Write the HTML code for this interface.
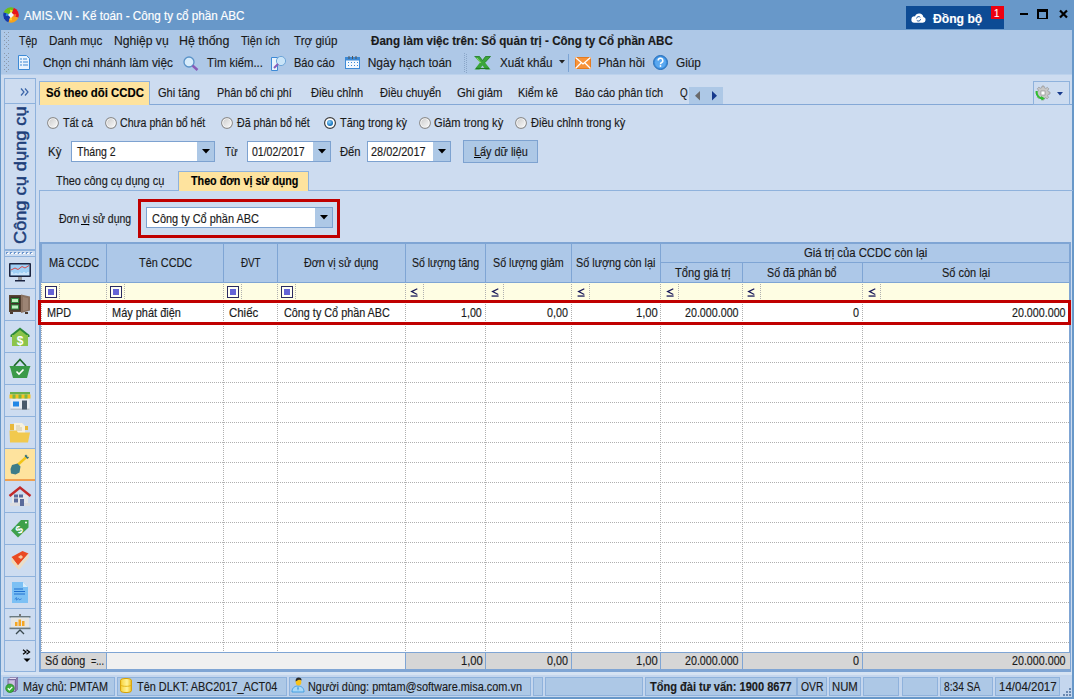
<!DOCTYPE html>
<html><head><meta charset="utf-8">
<style>
*{box-sizing:border-box;margin:0;padding:0}
html,body{width:1074px;height:699px;overflow:hidden;background:#cddcf0;font-family:"Liberation Sans",sans-serif;font-size:12px;color:#000;position:relative}
.a{position:absolute;white-space:nowrap}
.t{line-height:1;transform-origin:0 0;-webkit-text-stroke:0.15px currentColor}
svg{position:absolute;overflow:visible}
</style></head><body>
<div class="a" style="left:0px;top:0px;width:1074px;height:30px;background:#6898c9;"></div>
<div class="a" style="left:0px;top:30px;width:1074px;height:45px;background:#aec8e7;"></div>
<div class="a" style="left:1072px;top:30px;width:2px;height:669px;background:#6898c9;"></div>
<div class="a" style="left:0px;top:30px;width:1px;height:669px;background:#6898c9;"></div>
<svg style="left:3px;top:7px" width="16" height="16" viewBox="0 0 16 16"><g transform="rotate(20 8 8)"><path d="M8 8L8 .2A7.8 7.8 0 0 1 15.8 8z" fill="#e8141a"/><path d="M8 8L15.8 8A7.8 7.8 0 0 1 8 15.8z" fill="#f7a21a"/><path d="M8 8L8 15.8A7.8 7.8 0 0 1 .2 8z" fill="#1538a8"/><path d="M8 8L.2 8A7.8 7.8 0 0 1 8 .2z" fill="#6cbf1a"/><path d="M5.2 3.5A5 5 0 0 1 8 3V8z" fill="#f0e020"/><path d="M12.5 5.2A5 5 0 0 1 13 8H8z" fill="#ff6a20"/><path d="M10.8 12.5A5 5 0 0 1 8 13V8z" fill="#ffd030"/><path d="M3.5 10.8A5 5 0 0 1 3 8H8z" fill="#2a8ae0"/></g><path d="M8 5l3 3-3 3-3-3z" fill="#f4f4f8"/></svg>
<div class="a t" style="left:23.70px;top:10px;font-size:12px;color:#fff;transform:scaleX(0.9717);">AMIS.VN - Kế toán - Công ty cổ phần ABC</div>
<div class="a" style="left:906px;top:6px;width:98px;height:23px;background:#0d4b94;"></div>
<svg style="left:911px;top:13px" width="15" height="10" viewBox="0 0 15 10"><path d="M3.2 9.8h8.6a3 3 0 0 0 .6-5.9A4.4 4.4 0 0 0 4 3.4 3.2 3.2 0 0 0 3.2 9.8z" fill="#fff"/><path d="M5.5 5.5a2.2 2.2 0 0 1 3.8-1.2M9.6 6.2a2.2 2.2 0 0 1-3.8 1.2" fill="none" stroke="#0d4b94" stroke-width=".9"/></svg>
<div class="a t" style="left:932.70px;top:12px;font-size:13px;color:#fff;font-weight:bold;transform:scaleX(0.9346);">Đồng bộ</div>
<div class="a" style="left:991px;top:6px;width:13px;height:13px;background:#ee0010;"></div>
<div class="a t" style="left:994.42px;top:8px;font-size:11px;color:#fff;transform:scaleX(0.8800);">1</div>
<div class="a" style="left:1020px;top:13px;width:8px;height:2px;background:#000;"></div>
<div class="a" style="left:1037px;top:9px;width:11px;height:10px;border:1px solid #000;border-top-width:3px;border-left-width:2px;border-right-width:2px"></div>
<svg style="left:1059px;top:10px" width="9" height="8" viewBox="0 0 9 8"><path d="M1 .5l7 7M8 .5l-7 7" stroke="#000" stroke-width="2.2"/></svg>
<div class="a" style="left:4px;top:32px;width:1px;height:1px;background:#8c98a8;"></div>
<div class="a" style="left:8px;top:32px;width:1px;height:1px;background:#8c98a8;"></div>
<div class="a" style="left:6px;top:34px;width:1px;height:1px;background:#8c98a8;"></div>
<div class="a" style="left:4px;top:36px;width:1px;height:1px;background:#8c98a8;"></div>
<div class="a" style="left:8px;top:36px;width:1px;height:1px;background:#8c98a8;"></div>
<div class="a" style="left:6px;top:38px;width:1px;height:1px;background:#8c98a8;"></div>
<div class="a" style="left:4px;top:40px;width:1px;height:1px;background:#8c98a8;"></div>
<div class="a" style="left:8px;top:40px;width:1px;height:1px;background:#8c98a8;"></div>
<div class="a" style="left:6px;top:42px;width:1px;height:1px;background:#8c98a8;"></div>
<div class="a" style="left:4px;top:44px;width:1px;height:1px;background:#8c98a8;"></div>
<div class="a" style="left:8px;top:44px;width:1px;height:1px;background:#8c98a8;"></div>
<div class="a" style="left:6px;top:46px;width:1px;height:1px;background:#8c98a8;"></div>
<div class="a" style="left:4px;top:48px;width:1px;height:1px;background:#8c98a8;"></div>
<div class="a" style="left:8px;top:48px;width:1px;height:1px;background:#8c98a8;"></div>
<div class="a" style="left:4px;top:53px;width:1px;height:1px;background:#8c98a8;"></div>
<div class="a" style="left:8px;top:53px;width:1px;height:1px;background:#8c98a8;"></div>
<div class="a" style="left:6px;top:55px;width:1px;height:1px;background:#8c98a8;"></div>
<div class="a" style="left:4px;top:57px;width:1px;height:1px;background:#8c98a8;"></div>
<div class="a" style="left:8px;top:57px;width:1px;height:1px;background:#8c98a8;"></div>
<div class="a" style="left:6px;top:59px;width:1px;height:1px;background:#8c98a8;"></div>
<div class="a" style="left:4px;top:61px;width:1px;height:1px;background:#8c98a8;"></div>
<div class="a" style="left:8px;top:61px;width:1px;height:1px;background:#8c98a8;"></div>
<div class="a" style="left:6px;top:63px;width:1px;height:1px;background:#8c98a8;"></div>
<div class="a" style="left:4px;top:65px;width:1px;height:1px;background:#8c98a8;"></div>
<div class="a" style="left:8px;top:65px;width:1px;height:1px;background:#8c98a8;"></div>
<div class="a" style="left:6px;top:67px;width:1px;height:1px;background:#8c98a8;"></div>
<div class="a" style="left:4px;top:69px;width:1px;height:1px;background:#8c98a8;"></div>
<div class="a" style="left:8px;top:69px;width:1px;height:1px;background:#8c98a8;"></div>
<div class="a" style="left:6px;top:71px;width:1px;height:1px;background:#8c98a8;"></div>
<div class="a t" style="left:18.70px;top:35px;font-size:12px;color:#1a1a1a;transform:scaleX(0.8800);">Tệp</div>
<div class="a t" style="left:48.73px;top:35px;font-size:12px;color:#1a1a1a;transform:scaleX(0.9736);">Danh mục</div>
<div class="a t" style="left:113.69px;top:35px;font-size:12px;color:#1a1a1a;transform:scaleX(1.0115);">Nghiệp vụ</div>
<div class="a t" style="left:178.67px;top:35px;font-size:12px;color:#1a1a1a;transform:scaleX(1.0340);">Hệ thống</div>
<div class="a t" style="left:240.70px;top:35px;font-size:12px;color:#1a1a1a;transform:scaleX(0.9190);">Tiện ích</div>
<div class="a t" style="left:293.70px;top:35px;font-size:12px;color:#1a1a1a;transform:scaleX(0.9682);">Trợ giúp</div>
<div class="a t" style="left:370.70px;top:35px;font-size:12px;color:#1a1a1a;font-weight:bold;transform:scaleX(0.9667);">Đang làm việc trên: Sổ quản trị - Công ty Cổ phần ABC</div>
<svg style="left:18px;top:55px" width="12" height="15" viewBox="0 0 12 15"><path d="M.5 .5h8l3 3v11H.5z" fill="#e8f3fd" stroke="#3d8ad6"/><path d="M2 4h2M2 7h2M2 10h2M5 4h4M5 7h5M5 10h5" stroke="#3d8ad6" stroke-width="1.2"/></svg>
<div class="a t" style="left:42.71px;top:57px;font-size:12px;color:#1a1a1a;transform:scaleX(0.9892);">Chọn chi nhánh làm việc</div>
<svg style="left:183px;top:56px" width="16" height="15" viewBox="0 0 16 15"><circle cx="6" cy="6" r="5" fill="#d8ecfb" stroke="#5a93c8" stroke-width="1.3"/><path d="M9.5 9.5l5 4.5" stroke="#8a5bb8" stroke-width="2.4"/></svg>
<div class="a t" style="left:206.70px;top:57px;font-size:12px;color:#1a1a1a;transform:scaleX(0.9414);">Tìm kiếm...</div>
<svg style="left:271px;top:55px" width="16" height="16" viewBox="0 0 16 16"><path d="M.5 2.5h6v13H.5z" fill="#e8f3fd" stroke="#3d8ad6"/><circle cx="10" cy="6" r="4.6" fill="#c9e4f8" stroke="#6fa6d8"/><path d="M7 9l-4 4" stroke="#8a5bb8" stroke-width="2"/></svg>
<div class="a t" style="left:293.78px;top:57px;font-size:12px;color:#1a1a1a;transform:scaleX(0.9209);">Báo cáo</div>
<svg style="left:345px;top:56px" width="15" height="13" viewBox="0 0 15 13"><rect x=".5" y="1.5" width="14" height="11" fill="#f2f8fe" stroke="#3d8ad6"/><rect x=".5" y="1.5" width="14" height="3" fill="#3d8ad6"/><path d="M3 6.5h1M6 6.5h1M9 6.5h1M12 6.5h1M3 9.5h1M6 9.5h1M9 9.5h1M12 9.5h1" stroke="#3d8ad6"/><path d="M4 0v3M7.5 0v3M11 0v3" stroke="#555"/></svg>
<div class="a t" style="left:367.70px;top:57px;font-size:12px;color:#1a1a1a;">Ngày hạch toán</div>
<div class="a" style="left:464px;top:53px;width:1px;height:1px;background:#8aa6c8;"></div>
<div class="a" style="left:466px;top:54px;width:1px;height:1px;background:#8aa6c8;"></div>
<div class="a" style="left:464px;top:55px;width:1px;height:1px;background:#8aa6c8;"></div>
<div class="a" style="left:466px;top:56px;width:1px;height:1px;background:#8aa6c8;"></div>
<div class="a" style="left:464px;top:57px;width:1px;height:1px;background:#8aa6c8;"></div>
<div class="a" style="left:466px;top:58px;width:1px;height:1px;background:#8aa6c8;"></div>
<div class="a" style="left:464px;top:59px;width:1px;height:1px;background:#8aa6c8;"></div>
<div class="a" style="left:466px;top:60px;width:1px;height:1px;background:#8aa6c8;"></div>
<div class="a" style="left:464px;top:61px;width:1px;height:1px;background:#8aa6c8;"></div>
<div class="a" style="left:466px;top:62px;width:1px;height:1px;background:#8aa6c8;"></div>
<div class="a" style="left:464px;top:63px;width:1px;height:1px;background:#8aa6c8;"></div>
<div class="a" style="left:466px;top:64px;width:1px;height:1px;background:#8aa6c8;"></div>
<div class="a" style="left:464px;top:65px;width:1px;height:1px;background:#8aa6c8;"></div>
<div class="a" style="left:466px;top:66px;width:1px;height:1px;background:#8aa6c8;"></div>
<div class="a" style="left:464px;top:67px;width:1px;height:1px;background:#8aa6c8;"></div>
<div class="a" style="left:466px;top:68px;width:1px;height:1px;background:#8aa6c8;"></div>
<div class="a" style="left:464px;top:69px;width:1px;height:1px;background:#8aa6c8;"></div>
<div class="a" style="left:466px;top:70px;width:1px;height:1px;background:#8aa6c8;"></div>
<div class="a" style="left:464px;top:71px;width:1px;height:1px;background:#8aa6c8;"></div>
<div class="a" style="left:466px;top:72px;width:1px;height:1px;background:#8aa6c8;"></div>
<svg style="left:474px;top:56px" width="17" height="14" viewBox="0 0 17 14"><path d="M.5 .5h5l3 4 3-4h5l-5.5 6 5.5 7h-5l-3-4-3 4h-5l5.5-7z" fill="#3aa53a"/><path d="M.5 .5h5l3 4 3-4h5l-5.5 6" fill="none" stroke="#1f7a22" stroke-width=".8"/><path d="M2 12.5h13" stroke="#1f7a22" stroke-width="1.2"/><path d="M3 2l4 5" stroke="#8fdc6a" stroke-width="1"/></svg>
<div class="a t" style="left:499.70px;top:57px;font-size:12px;color:#1a1a1a;transform:scaleX(0.9736);">Xuất khẩu</div>
<svg style="left:559px;top:60px" width="6" height="4" viewBox="0 0 6 4"><path d="M0 0h6L3 3.5z" fill="#222"/></svg>
<div class="a" style="left:568px;top:54px;width:1px;height:18px;background:#7ba3d3;"></div>
<svg style="left:575px;top:57px" width="16" height="12" viewBox="0 0 16 12"><rect x=".5" y=".5" width="15" height="11" fill="#f7933a" stroke="#e57b1f"/><path d="M.5 .5L8 7l7.5-6.5M.5 11.5L6 6M15.5 11.5L10 6" fill="none" stroke="#fff" stroke-width="1.3"/></svg>
<div class="a t" style="left:597.71px;top:57px;font-size:12px;color:#1a1a1a;transform:scaleX(0.9913);">Phản hồi</div>
<svg style="left:653px;top:55px" width="15" height="15" viewBox="0 0 15 15"><circle cx="7.5" cy="7.5" r="7" fill="#3b8fe0" stroke="#2a6fb8"/><circle cx="7.5" cy="7.5" r="5.5" fill="#5aa8f0"/><path d="M5.2 5.6a2.3 2.3 0 1 1 3.2 2.1c-.7.3-.9.7-.9 1.5" fill="none" stroke="#fff" stroke-width="1.5"/><circle cx="7.5" cy="11" r=".9" fill="#fff"/></svg>
<div class="a t" style="left:675.72px;top:57px;font-size:12px;color:#1a1a1a;transform:scaleX(0.9833);">Giúp</div>
<div class="a" style="left:1px;top:74px;width:1071px;height:1px;background:#bcd2ec;"></div>
<div class="a" style="left:4px;top:78px;width:32px;height:594px;background:#cddcf0;border:1px solid #8fb2dc;"></div>
<div class="a" style="left:4px;top:103px;width:32px;height:1px;background:#8fb2dc;"></div>
<svg style="left:20px;top:88px" width="9" height="8" viewBox="0 0 9 8"><path d="M1 .5l3 3.5-3 3.5M5 .5l3 3.5-3 3.5" fill="none" stroke="#3a64a8" stroke-width="1.2"/></svg>
<div class="a" style="left:12px;top:244px;transform-origin:0 0;transform:rotate(-90deg)"><span style="display:block;font-size:17px;line-height:17px;color:#1e3f7a;white-space:nowrap;transform-origin:0 0;transform:scaleX(1.07);-webkit-text-stroke:0.5px #1e3f7a">Công cụ dụng cụ</span></div>
<div class="a" style="left:4px;top:249px;width:32px;height:2px;background:#8fb2dc;"></div>
<div class="a" style="left:6px;top:252px;width:2px;height:2px;background:#6a94cc;"></div>
<div class="a" style="left:8px;top:253px;width:1px;height:1px;background:#ffffff;"></div>
<div class="a" style="left:7px;top:253px;width:2px;height:1px;background:#ffffff;"></div>
<div class="a" style="left:10px;top:252px;width:2px;height:2px;background:#6a94cc;"></div>
<div class="a" style="left:12px;top:253px;width:1px;height:1px;background:#ffffff;"></div>
<div class="a" style="left:11px;top:253px;width:2px;height:1px;background:#ffffff;"></div>
<div class="a" style="left:14px;top:252px;width:2px;height:2px;background:#6a94cc;"></div>
<div class="a" style="left:16px;top:253px;width:1px;height:1px;background:#ffffff;"></div>
<div class="a" style="left:15px;top:253px;width:2px;height:1px;background:#ffffff;"></div>
<div class="a" style="left:18px;top:252px;width:2px;height:2px;background:#6a94cc;"></div>
<div class="a" style="left:20px;top:253px;width:1px;height:1px;background:#ffffff;"></div>
<div class="a" style="left:19px;top:253px;width:2px;height:1px;background:#ffffff;"></div>
<div class="a" style="left:22px;top:252px;width:2px;height:2px;background:#6a94cc;"></div>
<div class="a" style="left:24px;top:253px;width:1px;height:1px;background:#ffffff;"></div>
<div class="a" style="left:23px;top:253px;width:2px;height:1px;background:#ffffff;"></div>
<div class="a" style="left:26px;top:252px;width:2px;height:2px;background:#6a94cc;"></div>
<div class="a" style="left:28px;top:253px;width:1px;height:1px;background:#ffffff;"></div>
<div class="a" style="left:27px;top:253px;width:2px;height:1px;background:#ffffff;"></div>
<div class="a" style="left:30px;top:252px;width:2px;height:2px;background:#6a94cc;"></div>
<div class="a" style="left:32px;top:253px;width:1px;height:1px;background:#ffffff;"></div>
<div class="a" style="left:31px;top:253px;width:2px;height:1px;background:#ffffff;"></div>
<div class="a" style="left:5px;top:256px;width:30px;height:1px;background:#8fb2dc;"></div>
<div class="a" style="left:5px;top:288px;width:30px;height:1px;background:#8fb2dc;"></div>
<div class="a" style="left:5px;top:320px;width:30px;height:1px;background:#8fb2dc;"></div>
<div class="a" style="left:5px;top:352px;width:30px;height:1px;background:#8fb2dc;"></div>
<div class="a" style="left:5px;top:384px;width:30px;height:1px;background:#8fb2dc;"></div>
<div class="a" style="left:5px;top:416px;width:30px;height:1px;background:#8fb2dc;"></div>
<div class="a" style="left:5px;top:448px;width:30px;height:1px;background:#8fb2dc;"></div>
<div class="a" style="left:5px;top:480px;width:30px;height:1px;background:#8fb2dc;"></div>
<div class="a" style="left:5px;top:512px;width:30px;height:1px;background:#8fb2dc;"></div>
<div class="a" style="left:5px;top:544px;width:30px;height:1px;background:#8fb2dc;"></div>
<div class="a" style="left:5px;top:576px;width:30px;height:1px;background:#8fb2dc;"></div>
<div class="a" style="left:5px;top:608px;width:30px;height:1px;background:#8fb2dc;"></div>
<div class="a" style="left:5px;top:640px;width:30px;height:1px;background:#8fb2dc;"></div>
<div class="a" style="left:5px;top:449px;width:30px;height:31px;background:#fee39e;"></div>
<div class="a" style="left:5px;top:479px;width:30px;height:2px;background:#f0a050;"></div>
<svg style="left:8px;top:261px" width="24" height="24" viewBox="0 0 24 24"><rect x="1" y="2" width="22" height="14" rx="1" fill="#1c2440"/><rect x="2.5" y="3.5" width="19" height="11" fill="#9fd0f6"/><path d="M3 9l4-2 3 1.5 4-3 3 1.5 4-2.5" fill="none" stroke="#d94a4a" stroke-width="1"/><path d="M4 14v-3M6 14v-1.5M8 14v-2M10 14v-1.5M12 14v-2.5M14 14v-2M16 14v-3M18 14v-2M20 14v-3" stroke="#f4f8ff" stroke-width="1"/><rect x="10" y="16" width="4" height="3" fill="#9a9a9a"/><rect x="7" y="19" width="10" height="1.5" fill="#1c2440"/></svg>
<svg style="left:8px;top:293px" width="24" height="24" viewBox="0 0 24 24"><rect x="1" y="2" width="13" height="17" fill="#5a4636"/><rect x="2.5" y="3.5" width="10" height="14" fill="#3e3026"/><rect x="3" y="5" width="8" height="5" fill="#2e8a3e"/><rect x="4" y="6" width="6" height="3" fill="#bfeec0"/><rect x="3" y="11.5" width="8" height="5" fill="#2e8a3e"/><rect x="4" y="12.5" width="6" height="3" fill="#bfeec0"/><path d="M13 1.5l9 2v14l-9 2.5z" fill="#8a7262"/><path d="M15 4l5 1.2v11.6l-5 1.2z" fill="#9c8474"/><rect x="2" y="19" width="3" height="2" fill="#4a3a2e"/><rect x="17" y="19" width="3" height="2" fill="#4a3a2e"/></svg>
<svg style="left:8px;top:325px" width="24" height="24" viewBox="0 0 24 24"><path d="M12 2.5l9.5 7.5v2H2.5v-2z" fill="#2c8a3a"/><rect x="4" y="10" width="16" height="11" fill="#8cc44a"/><path d="M12 5l7 5.5H5z" fill="#8cc44a"/><text x="12" y="19.5" font-size="12" font-family="Liberation Sans" font-weight="bold" fill="#fff" text-anchor="middle">$</text></svg>
<svg style="left:8px;top:357px" width="24" height="24" viewBox="0 0 24 24"><path d="M6 9l6-6.5 6 6.5" fill="none" stroke="#1f6a2a" stroke-width="1.8"/><path d="M1.5 9h21l-1 2.5-2.5 9.5H5L2.5 11.5z" fill="#3a9a48"/><path d="M8.5 14.5l2.5 2.5 4.5-4.5" fill="none" stroke="#fff" stroke-width="1.6"/></svg>
<svg style="left:8px;top:389px" width="24" height="24" viewBox="0 0 24 24"><rect x="2" y="3" width="20" height="2.5" fill="#6ab04c"/><path d="M1.5 5.5h21v4h-21z" fill="#f6c21c"/><path d="M4.5 5.5h3v4h-3zM10.5 5.5h3v4h-3zM16.5 5.5h3v4h-3z" fill="#7ab648"/><rect x="2.5" y="10" width="19" height="11" fill="#e9edf2"/><rect x="2.5" y="19.5" width="19" height="1.5" fill="#b9c2cc"/><rect x="5" y="12.5" width="6" height="5" fill="#2388e6"/><rect x="14" y="11.5" width="5" height="9" fill="#48596a"/></svg>
<svg style="left:8px;top:421px" width="24" height="24" viewBox="0 0 24 24"><path d="M2 3h6l1 2h11v4H2z" fill="#e8b83a"/><path d="M6 2h8l3 3v9H6z" fill="#f7f1de"/><path d="M8 5h4M8 7h6M8 9h6" stroke="#c9bd98" stroke-width=".8"/><path d="M1.5 9.5h7l1.5 2h12l-2 10h-18z" fill="#f1c94e"/></svg>
<svg style="left:8px;top:453px" width="24" height="24" viewBox="0 0 24 24"><path d="M8.5 13l11-10" stroke="#f2c518" stroke-width="2.4"/><path d="M18 1.5l3 3-1.5 1.5-3-3z" fill="#2f6f7f"/><path d="M19 2.8l1 1" stroke="#f6f0b0" stroke-width="1"/><path d="M9.5 10.5l3 3-1 6-4 2-4.5-1-.5-4.5 1.5-4z" fill="#3d7c89"/></svg>
<svg style="left:8px;top:485px" width="24" height="24" viewBox="0 0 24 24"><rect x="4" y="10" width="16" height="11" fill="#e6e7ea"/><rect x="2" y="18" width="20" height="3" fill="#dcdde0"/><path d="M1.5 11l10.5-8.5L22.5 11" fill="none" stroke="#c22a2a" stroke-width="2.4"/><rect x="6" y="9.5" width="4" height="3" fill="#5a6a9a"/><rect x="11" y="9.5" width="4" height="3" fill="#5a6a9a"/><rect x="6" y="13.5" width="4" height="4" fill="#5a6a9a"/><rect x="12" y="14" width="4" height="7" fill="#5a6a9a"/></svg>
<svg style="left:8px;top:517px" width="24" height="24" viewBox="0 0 24 24"><path d="M3 13.5l10-10.5h7.5v7.5l-10.5 10z" fill="#3fa04a"/><circle cx="18" cy="5.5" r="1" fill="#fff"/><text x="11" y="16.5" font-size="11" font-family="Liberation Sans" font-weight="bold" fill="#fff" text-anchor="middle" transform="rotate(-40 11 12.5)">$</text></svg>
<svg style="left:8px;top:549px" width="24" height="24" viewBox="0 0 24 24"><path d="M3.5 8l11-6 6 2.5-10.5 12z" fill="#ea4a22"/><path d="M3.5 8l6.5 8.5 1 4.5-7.5-8z" fill="#f4d8b0"/><path d="M10 16.5l10.5-12 .5 4-10 12.5z" fill="#e9ddc8"/><path d="M10 8l3-2 2 2-2 2z" fill="#f8c8a0"/></svg>
<svg style="left:8px;top:581px" width="24" height="24" viewBox="0 0 24 24"><path d="M4 1h11l5 5v16H4z" fill="#7cc0f4"/><path d="M15 1v5h5z" fill="#d8ecfb"/><path d="M6 8h9M6 10.5h11M6 13h11" stroke="#1f6fd0" stroke-width="1"/><path d="M7 18.5c1-3 2-2 1.5 0s2-2 2.5-.5 1 .5 2.5-.2" fill="none" stroke="#1f6fd0" stroke-width=".8"/></svg>
<svg style="left:8px;top:613px" width="24" height="24" viewBox="0 0 24 24"><rect x="11" y="1" width="2" height="2" fill="#777"/><rect x="1.5" y="3" width="21" height="1.6" fill="#6a7a80"/><rect x="3" y="4.6" width="18" height="10" fill="#e6e6e2"/><path d="M7 13V9h2.5v4zM10.5 13V6.5H13V13zM14 13V8h2.5v5z" fill="#f5a623"/><rect x="1.5" y="14.6" width="21" height="1.6" fill="#6a7a80"/><path d="M8 21l4-4 4 4" fill="none" stroke="#3a4a50" stroke-width="1.3"/></svg>
<svg style="left:22px;top:649px" width="9" height="14" viewBox="0 0 9 14"><path d="M1 .8l3 2.2-3 2.2M4.5 .8l3 2.2-3 2.2" fill="none" stroke="#000" stroke-width="1.3"/><path d="M1.5 9.5h7l-3.5 3.5z" fill="#000"/></svg>
<div class="a" style="left:36px;top:75px;width:3px;height:597px;background:#cddcf0;"></div>
<div class="a" style="left:39px;top:104px;width:1033px;height:1px;background:#84a8d6;"></div>
<div class="a" style="left:39px;top:81px;width:111px;height:24px;background:#fee39e;border:1px solid #8fb2dc;border-bottom:none"></div>
<div class="a t" style="left:45.75px;top:87px;font-size:12px;color:#000;font-weight:bold;transform:scaleX(0.9471);">Số theo dõi CCDC</div>
<div class="a t" style="left:157.78px;top:87px;font-size:12px;color:#1a1a1a;transform:scaleX(0.9227);">Ghi tăng</div>
<div class="a t" style="left:216.80px;top:87px;font-size:12px;color:#1a1a1a;transform:scaleX(0.8976);">Phân bổ chi phí</div>
<div class="a t" style="left:310.70px;top:87px;font-size:12px;color:#1a1a1a;transform:scaleX(0.9214);">Điều chỉnh</div>
<div class="a t" style="left:379.70px;top:87px;font-size:12px;color:#1a1a1a;transform:scaleX(0.9182);">Điều chuyển</div>
<div class="a t" style="left:456.75px;top:87px;font-size:12px;color:#1a1a1a;transform:scaleX(0.9478);">Ghi giảm</div>
<div class="a t" style="left:517.78px;top:87px;font-size:12px;color:#1a1a1a;transform:scaleX(0.9190);">Kiểm kê</div>
<div class="a t" style="left:574.79px;top:87px;font-size:12px;color:#1a1a1a;transform:scaleX(0.9116);">Báo cáo phân tích</div>
<div class="a t" style="left:680.30px;top:87px;font-size:12px;color:#1a1a1a;transform:scaleX(0.8222);">Q</div>
<div class="a" style="left:689px;top:87px;width:34px;height:17px;background:#adc8e6;"></div>
<svg style="left:695px;top:91px" width="23" height="10" viewBox="0 0 23 10"><path d="M5 0v9.5L0 4.75z" fill="#6a6a6a"/><path d="M17 0v9.5l5-4.75z" fill="#16398c"/></svg>
<div class="a" style="left:1033px;top:81px;width:37px;height:24px;background:#cddcf0;border:1px solid #8fb2dc;"></div>
<svg style="left:1035px;top:85px" width="16" height="16" viewBox="0 0 16 16"><path d="M7 1h2l.4 1.8 1.4.6 1.6-1 1.4 1.4-1 1.6.6 1.4L15 7v2l-1.8.4-.6 1.4 1 1.6-1.4 1.4-1.6-1-1.4.6L9 15H7l-.4-1.8-1.4-.6-1.6 1-1.4-1.4 1-1.6-.6-1.4L1 9V7l1.8-.4.6-1.4-1-1.6 1.4-1.4 1.6 1 1.4-.6z" fill="#c8c8c8" stroke="#8a8a8a" stroke-width=".6"/><rect x="6" y="6" width="4" height="4" fill="#fff" stroke="#888" stroke-width=".6"/><path d="M1.5 6c0 5 3 7.5 6.5 7.5" fill="none" stroke="#2fbf2f" stroke-width="2"/><path d="M6 11l4 2.5-3.5 2z" fill="#2fbf2f"/></svg>
<svg style="left:1057px;top:92px" width="6" height="4" viewBox="0 0 6 4"><path d="M0 0h6L3 3.5z" fill="#16398c"/></svg>
<svg style="left:47px;top:117px" width="12" height="12" viewBox="0 0 12 12"><defs><linearGradient id="rg47" x1="0" y1="0" x2="1" y2="1"><stop offset="0" stop-color="#cfcfcf"/><stop offset="1" stop-color="#f6f6f6"/></linearGradient></defs><circle cx="6" cy="6" r="5.4" fill="#fff" stroke="#8c8c8c" stroke-width="1.1"/><circle cx="6" cy="6" r="3.9" fill="url(#rg47)"/></svg>
<div class="a t" style="left:62.70px;top:117px;font-size:12px;color:#1a1a1a;transform:scaleX(0.8970);">Tất cả</div>
<svg style="left:105px;top:117px" width="12" height="12" viewBox="0 0 12 12"><defs><linearGradient id="rg105" x1="0" y1="0" x2="1" y2="1"><stop offset="0" stop-color="#cfcfcf"/><stop offset="1" stop-color="#f6f6f6"/></linearGradient></defs><circle cx="6" cy="6" r="5.4" fill="#fff" stroke="#8c8c8c" stroke-width="1.1"/><circle cx="6" cy="6" r="3.9" fill="url(#rg105)"/></svg>
<div class="a t" style="left:119.82px;top:117px;font-size:12px;color:#1a1a1a;transform:scaleX(0.8812);">Chưa phân bổ hết</div>
<svg style="left:221px;top:117px" width="12" height="12" viewBox="0 0 12 12"><defs><linearGradient id="rg221" x1="0" y1="0" x2="1" y2="1"><stop offset="0" stop-color="#cfcfcf"/><stop offset="1" stop-color="#f6f6f6"/></linearGradient></defs><circle cx="6" cy="6" r="5.4" fill="#fff" stroke="#8c8c8c" stroke-width="1.1"/><circle cx="6" cy="6" r="3.9" fill="url(#rg221)"/></svg>
<div class="a t" style="left:236.70px;top:117px;font-size:12px;color:#1a1a1a;transform:scaleX(0.8854);">Đã phân bổ hết</div>
<svg style="left:324px;top:117px" width="12" height="12" viewBox="0 0 12 12"><defs><radialGradient id="rg324" cx="40%" cy="35%" r="60%"><stop offset="0" stop-color="#8fd4ff"/><stop offset="1" stop-color="#1570b8"/></radialGradient></defs><circle cx="6" cy="6" r="5.4" fill="#fff" stroke="#3a3a3a" stroke-width="1.2"/><circle cx="6" cy="6" r="3" fill="url(#rg324)"/></svg>
<div class="a t" style="left:339.70px;top:117px;font-size:12px;color:#1a1a1a;transform:scaleX(0.9123);">Tăng trong kỳ</div>
<svg style="left:419px;top:117px" width="12" height="12" viewBox="0 0 12 12"><defs><linearGradient id="rg419" x1="0" y1="0" x2="1" y2="1"><stop offset="0" stop-color="#cfcfcf"/><stop offset="1" stop-color="#f6f6f6"/></linearGradient></defs><circle cx="6" cy="6" r="5.4" fill="#fff" stroke="#8c8c8c" stroke-width="1.1"/><circle cx="6" cy="6" r="3.9" fill="url(#rg419)"/></svg>
<div class="a t" style="left:433.77px;top:117px;font-size:12px;color:#1a1a1a;transform:scaleX(0.9270);">Giảm trong kỳ</div>
<svg style="left:515px;top:117px" width="12" height="12" viewBox="0 0 12 12"><defs><linearGradient id="rg515" x1="0" y1="0" x2="1" y2="1"><stop offset="0" stop-color="#cfcfcf"/><stop offset="1" stop-color="#f6f6f6"/></linearGradient></defs><circle cx="6" cy="6" r="5.4" fill="#fff" stroke="#8c8c8c" stroke-width="1.1"/><circle cx="6" cy="6" r="3.9" fill="url(#rg515)"/></svg>
<div class="a t" style="left:530.70px;top:117px;font-size:12px;color:#1a1a1a;transform:scaleX(0.9184);">Điều chỉnh trong kỳ</div>
<div class="a t" style="left:48.35px;top:146px;font-size:12px;color:#1a1a1a;transform:scaleX(0.9538);">Kỳ</div>
<div class="a" style="left:71px;top:141px;width:144px;height:21px;background:#fff;border:1px solid #7da2d0;"></div>
<div class="a" style="left:197px;top:142px;width:17px;height:19px;background:#adc8e6;"></div>
<svg style="left:202px;top:149px" width="8" height="5" viewBox="0 0 8 5"><path d="M0 0h8L4 4.5z" fill="#000"/></svg>
<div class="a t" style="left:76.70px;top:146px;font-size:12px;color:#1a1a1a;transform:scaleX(0.8773);">Tháng 2</div>
<div class="a t" style="left:225.30px;top:146px;font-size:12px;color:#1a1a1a;transform:scaleX(0.8267);">Từ</div>
<div class="a" style="left:247px;top:141px;width:84px;height:21px;background:#fff;border:1px solid #7da2d0;"></div>
<div class="a" style="left:313px;top:142px;width:17px;height:19px;background:#adc8e6;"></div>
<svg style="left:318px;top:149px" width="8" height="5" viewBox="0 0 8 5"><path d="M0 0h8L4 4.5z" fill="#000"/></svg>
<div class="a t" style="left:251.70px;top:146px;font-size:12px;color:#1a1a1a;transform:scaleX(0.8767);">01/02/2017</div>
<div class="a t" style="left:339.70px;top:146px;font-size:12px;color:#1a1a1a;transform:scaleX(0.9333);">Đến</div>
<div class="a" style="left:367px;top:141px;width:84px;height:21px;background:#fff;border:1px solid #7da2d0;"></div>
<div class="a" style="left:433px;top:142px;width:17px;height:19px;background:#adc8e6;"></div>
<svg style="left:438px;top:149px" width="8" height="5" viewBox="0 0 8 5"><path d="M0 0h8L4 4.5z" fill="#000"/></svg>
<div class="a t" style="left:370.79px;top:146px;font-size:12px;color:#1a1a1a;transform:scaleX(0.9085);">28/02/2017</div>
<div class="a" style="left:463px;top:140px;width:75px;height:23px;background:#adc8e6;border:1px solid #7da2d0;"></div>
<div class="a t" style="left:473.79px;top:146px;font-size:12px;color:#1a1a1a;transform:scaleX(0.9069);">Lấy dữ liệu</div>
<div class="a" style="left:474px;top:157px;width:7px;height:1px;background:#000;"></div>
<div class="a" style="left:39px;top:190px;width:1034px;height:1px;background:#8fb2dc;"></div>
<div class="a t" style="left:55.70px;top:175px;font-size:12px;color:#1a1a1a;transform:scaleX(0.9119);">Theo công cụ dụng cụ</div>
<div class="a" style="left:178px;top:171px;width:131px;height:20px;background:#fee39e;border:1px solid #8fb2dc;border-bottom:none"></div>
<div class="a t" style="left:190.70px;top:175px;font-size:12px;color:#000;font-weight:bold;transform:scaleX(0.8958);">Theo đơn vị sử dụng</div>
<div class="a" style="left:39px;top:190px;width:1px;height:52px;background:#8fb2dc;"></div>
<div class="a t" style="left:58.70px;top:213px;font-size:12px;color:#1a1a1a;transform:scaleX(0.8732);">Đơn vị sử dụng</div>
<div class="a" style="left:81px;top:224px;width:8px;height:1px;background:#000;"></div>
<div class="a" style="left:138px;top:199px;width:202px;height:39px;border:3px solid #c00000;"></div>
<div class="a" style="left:146px;top:207px;width:187px;height:21px;background:#fff;border:1px solid #7da2d0;"></div>
<div class="a" style="left:315px;top:208px;width:17px;height:19px;background:#adc8e6;"></div>
<svg style="left:320px;top:215px" width="8" height="5" viewBox="0 0 8 5"><path d="M0 0h8L4 4.5z" fill="#000"/></svg>
<div class="a t" style="left:151.79px;top:213px;font-size:12px;color:#1a1a1a;transform:scaleX(0.9103);">Công ty Cổ phần ABC</div>
<div class="a" style="left:39px;top:242px;width:1032px;height:40px;background:#adc8e8;"></div>
<div class="a" style="left:39px;top:242px;width:1032px;height:2px;background:#7fa5d4;"></div>
<div class="a" style="left:661px;top:262px;width:409px;height:1px;background:#7fa5d4;"></div>
<div class="a" style="left:39px;top:282px;width:1032px;height:1px;background:#7fa5d4;"></div>
<div class="a" style="left:106px;top:243px;width:1px;height:39px;background:#7fa5d4;"></div>
<div class="a" style="left:223px;top:243px;width:1px;height:39px;background:#7fa5d4;"></div>
<div class="a" style="left:277px;top:243px;width:1px;height:39px;background:#7fa5d4;"></div>
<div class="a" style="left:405px;top:243px;width:1px;height:39px;background:#7fa5d4;"></div>
<div class="a" style="left:485px;top:243px;width:1px;height:39px;background:#7fa5d4;"></div>
<div class="a" style="left:571px;top:243px;width:1px;height:39px;background:#7fa5d4;"></div>
<div class="a" style="left:660px;top:243px;width:1px;height:39px;background:#7fa5d4;"></div>
<div class="a" style="left:742px;top:262px;width:1px;height:20px;background:#7fa5d4;"></div>
<div class="a" style="left:862px;top:262px;width:1px;height:20px;background:#7fa5d4;"></div>
<div class="a" style="left:41px;top:283px;width:1029px;height:19px;background:#fefde3;"></div>
<div class="a" style="left:41px;top:302px;width:1029px;height:350px;background:#ffffff;"></div>
<div class="a" style="left:41px;top:342px;width:1029px;height:1px;background-image:linear-gradient(to right,#b0b0b0 50%,transparent 50%);background-size:2px 1px;background-position:1px 0;"></div>
<div class="a" style="left:41px;top:362px;width:1029px;height:1px;background-image:linear-gradient(to right,#b0b0b0 50%,transparent 50%);background-size:2px 1px;background-position:1px 0;"></div>
<div class="a" style="left:41px;top:382px;width:1029px;height:1px;background-image:linear-gradient(to right,#b0b0b0 50%,transparent 50%);background-size:2px 1px;background-position:1px 0;"></div>
<div class="a" style="left:41px;top:402px;width:1029px;height:1px;background-image:linear-gradient(to right,#b0b0b0 50%,transparent 50%);background-size:2px 1px;background-position:1px 0;"></div>
<div class="a" style="left:41px;top:422px;width:1029px;height:1px;background-image:linear-gradient(to right,#b0b0b0 50%,transparent 50%);background-size:2px 1px;background-position:1px 0;"></div>
<div class="a" style="left:41px;top:442px;width:1029px;height:1px;background-image:linear-gradient(to right,#b0b0b0 50%,transparent 50%);background-size:2px 1px;background-position:1px 0;"></div>
<div class="a" style="left:41px;top:462px;width:1029px;height:1px;background-image:linear-gradient(to right,#b0b0b0 50%,transparent 50%);background-size:2px 1px;background-position:1px 0;"></div>
<div class="a" style="left:41px;top:482px;width:1029px;height:1px;background-image:linear-gradient(to right,#b0b0b0 50%,transparent 50%);background-size:2px 1px;background-position:1px 0;"></div>
<div class="a" style="left:41px;top:502px;width:1029px;height:1px;background-image:linear-gradient(to right,#b0b0b0 50%,transparent 50%);background-size:2px 1px;background-position:1px 0;"></div>
<div class="a" style="left:41px;top:522px;width:1029px;height:1px;background-image:linear-gradient(to right,#b0b0b0 50%,transparent 50%);background-size:2px 1px;background-position:1px 0;"></div>
<div class="a" style="left:41px;top:542px;width:1029px;height:1px;background-image:linear-gradient(to right,#b0b0b0 50%,transparent 50%);background-size:2px 1px;background-position:1px 0;"></div>
<div class="a" style="left:41px;top:562px;width:1029px;height:1px;background-image:linear-gradient(to right,#b0b0b0 50%,transparent 50%);background-size:2px 1px;background-position:1px 0;"></div>
<div class="a" style="left:41px;top:582px;width:1029px;height:1px;background-image:linear-gradient(to right,#b0b0b0 50%,transparent 50%);background-size:2px 1px;background-position:1px 0;"></div>
<div class="a" style="left:41px;top:602px;width:1029px;height:1px;background-image:linear-gradient(to right,#b0b0b0 50%,transparent 50%);background-size:2px 1px;background-position:1px 0;"></div>
<div class="a" style="left:41px;top:622px;width:1029px;height:1px;background-image:linear-gradient(to right,#b0b0b0 50%,transparent 50%);background-size:2px 1px;background-position:1px 0;"></div>
<div class="a" style="left:41px;top:642px;width:1029px;height:1px;background-image:linear-gradient(to right,#b0b0b0 50%,transparent 50%);background-size:2px 1px;background-position:1px 0;"></div>
<div class="a" style="left:41px;top:283px;width:1px;height:369px;background-image:linear-gradient(to bottom,#b0b0b0 50%,transparent 50%);background-size:1px 2px;background-position:0 1px;"></div>
<div class="a" style="left:106px;top:283px;width:1px;height:369px;background-image:linear-gradient(to bottom,#b0b0b0 50%,transparent 50%);background-size:1px 2px;background-position:0 1px;"></div>
<div class="a" style="left:223px;top:283px;width:1px;height:369px;background-image:linear-gradient(to bottom,#b0b0b0 50%,transparent 50%);background-size:1px 2px;background-position:0 1px;"></div>
<div class="a" style="left:277px;top:283px;width:1px;height:369px;background-image:linear-gradient(to bottom,#b0b0b0 50%,transparent 50%);background-size:1px 2px;background-position:0 1px;"></div>
<div class="a" style="left:405px;top:283px;width:1px;height:369px;background-image:linear-gradient(to bottom,#b0b0b0 50%,transparent 50%);background-size:1px 2px;background-position:0 1px;"></div>
<div class="a" style="left:485px;top:283px;width:1px;height:369px;background-image:linear-gradient(to bottom,#b0b0b0 50%,transparent 50%);background-size:1px 2px;background-position:0 1px;"></div>
<div class="a" style="left:571px;top:283px;width:1px;height:369px;background-image:linear-gradient(to bottom,#b0b0b0 50%,transparent 50%);background-size:1px 2px;background-position:0 1px;"></div>
<div class="a" style="left:660px;top:283px;width:1px;height:369px;background-image:linear-gradient(to bottom,#b0b0b0 50%,transparent 50%);background-size:1px 2px;background-position:0 1px;"></div>
<div class="a" style="left:742px;top:283px;width:1px;height:369px;background-image:linear-gradient(to bottom,#b0b0b0 50%,transparent 50%);background-size:1px 2px;background-position:0 1px;"></div>
<div class="a" style="left:862px;top:283px;width:1px;height:369px;background-image:linear-gradient(to bottom,#b0b0b0 50%,transparent 50%);background-size:1px 2px;background-position:0 1px;"></div>
<div class="a" style="left:59px;top:283px;width:1px;height:19px;background-image:linear-gradient(to bottom,#b0b0b0 50%,transparent 50%);background-size:1px 2px;background-position:0 1px;"></div>
<div class="a" style="left:124px;top:283px;width:1px;height:19px;background-image:linear-gradient(to bottom,#b0b0b0 50%,transparent 50%);background-size:1px 2px;background-position:0 1px;"></div>
<div class="a" style="left:241px;top:283px;width:1px;height:19px;background-image:linear-gradient(to bottom,#b0b0b0 50%,transparent 50%);background-size:1px 2px;background-position:0 1px;"></div>
<div class="a" style="left:295px;top:283px;width:1px;height:19px;background-image:linear-gradient(to bottom,#b0b0b0 50%,transparent 50%);background-size:1px 2px;background-position:0 1px;"></div>
<div class="a" style="left:423px;top:283px;width:1px;height:19px;background-image:linear-gradient(to bottom,#b0b0b0 50%,transparent 50%);background-size:1px 2px;background-position:0 1px;"></div>
<div class="a" style="left:503px;top:283px;width:1px;height:19px;background-image:linear-gradient(to bottom,#b0b0b0 50%,transparent 50%);background-size:1px 2px;background-position:0 1px;"></div>
<div class="a" style="left:589px;top:283px;width:1px;height:19px;background-image:linear-gradient(to bottom,#b0b0b0 50%,transparent 50%);background-size:1px 2px;background-position:0 1px;"></div>
<div class="a" style="left:678px;top:283px;width:1px;height:19px;background-image:linear-gradient(to bottom,#b0b0b0 50%,transparent 50%);background-size:1px 2px;background-position:0 1px;"></div>
<div class="a" style="left:760px;top:283px;width:1px;height:19px;background-image:linear-gradient(to bottom,#b0b0b0 50%,transparent 50%);background-size:1px 2px;background-position:0 1px;"></div>
<div class="a" style="left:880px;top:283px;width:1px;height:19px;background-image:linear-gradient(to bottom,#b0b0b0 50%,transparent 50%);background-size:1px 2px;background-position:0 1px;"></div>
<div class="a" style="left:39px;top:242px;width:2px;height:430px;background:#7fa5d4;"></div>
<div class="a" style="left:41px;top:244px;width:1px;height:39px;background:#7fa5d4;"></div>
<div class="a" style="left:1069px;top:242px;width:2px;height:430px;background:#7fa5d4;"></div>
<div class="a" style="left:39px;top:669px;width:1032px;height:3px;background:#7fa5d4;"></div>
<div class="a" style="left:41px;top:652px;width:1029px;height:1px;background:#7fa5d4;"></div>
<div class="a t" style="left:48.78px;top:257px;font-size:12px;color:#1a1a1a;transform:scaleX(0.9170);">Mã CCDC</div>
<div class="a t" style="left:138.70px;top:257px;font-size:12px;color:#1a1a1a;transform:scaleX(0.9069);">Tên CCDC</div>
<div class="a t" style="left:240.70px;top:257px;font-size:12px;color:#1a1a1a;transform:scaleX(0.8167);">ĐVT</div>
<div class="a t" style="left:303.70px;top:257px;font-size:12px;color:#1a1a1a;transform:scaleX(0.8976);">Đơn vị sử dụng</div>
<div class="a t" style="left:411.83px;top:257px;font-size:12px;color:#1a1a1a;transform:scaleX(0.8747);">Số lượng tăng</div>
<div class="a t" style="left:492.81px;top:257px;font-size:12px;color:#1a1a1a;transform:scaleX(0.8923);">Số lượng giảm</div>
<div class="a t" style="left:575.80px;top:257px;font-size:12px;color:#1a1a1a;transform:scaleX(0.9023);">Số lượng còn lại</div>
<div class="a t" style="left:803.76px;top:247px;font-size:12px;color:#1a1a1a;transform:scaleX(0.9426);">Giá trị của CCDC còn lại</div>
<div class="a t" style="left:674.70px;top:267px;font-size:12px;color:#1a1a1a;transform:scaleX(0.9254);">Tổng giá trị</div>
<div class="a t" style="left:766.81px;top:267px;font-size:12px;color:#1a1a1a;transform:scaleX(0.8909);">Số đã phân bổ</div>
<div class="a t" style="left:941.79px;top:267px;font-size:12px;color:#1a1a1a;transform:scaleX(0.9137);">Số còn lại</div>
<div class="a" style="left:45px;top:286px;width:12px;height:12px;background:#fffff4;border:1px solid #2a2a60;"></div>
<div class="a" style="left:48px;top:289px;width:6px;height:6px;background:#6464d6;"></div>
<div class="a" style="left:110px;top:286px;width:12px;height:12px;background:#fffff4;border:1px solid #2a2a60;"></div>
<div class="a" style="left:113px;top:289px;width:6px;height:6px;background:#6464d6;"></div>
<div class="a" style="left:227px;top:286px;width:12px;height:12px;background:#fffff4;border:1px solid #2a2a60;"></div>
<div class="a" style="left:230px;top:289px;width:6px;height:6px;background:#6464d6;"></div>
<div class="a" style="left:281px;top:286px;width:12px;height:12px;background:#fffff4;border:1px solid #2a2a60;"></div>
<div class="a" style="left:284px;top:289px;width:6px;height:6px;background:#6464d6;"></div>
<svg style="left:410px;top:288px" width="9" height="10" viewBox="0 0 9 10"><path d="M7.3 .8L1.6 3.6l5.7 2.9" fill="none" stroke="#1a1a5a" stroke-width="1.25"/><rect x=".6" y="7.4" width="7" height="1.3" fill="#1a1a5a"/></svg>
<svg style="left:491px;top:288px" width="9" height="10" viewBox="0 0 9 10"><path d="M7.3 .8L1.6 3.6l5.7 2.9" fill="none" stroke="#1a1a5a" stroke-width="1.25"/><rect x=".6" y="7.4" width="7" height="1.3" fill="#1a1a5a"/></svg>
<svg style="left:577px;top:288px" width="9" height="10" viewBox="0 0 9 10"><path d="M7.3 .8L1.6 3.6l5.7 2.9" fill="none" stroke="#1a1a5a" stroke-width="1.25"/><rect x=".6" y="7.4" width="7" height="1.3" fill="#1a1a5a"/></svg>
<svg style="left:666px;top:288px" width="9" height="10" viewBox="0 0 9 10"><path d="M7.3 .8L1.6 3.6l5.7 2.9" fill="none" stroke="#1a1a5a" stroke-width="1.25"/><rect x=".6" y="7.4" width="7" height="1.3" fill="#1a1a5a"/></svg>
<svg style="left:747px;top:288px" width="9" height="10" viewBox="0 0 9 10"><path d="M7.3 .8L1.6 3.6l5.7 2.9" fill="none" stroke="#1a1a5a" stroke-width="1.25"/><rect x=".6" y="7.4" width="7" height="1.3" fill="#1a1a5a"/></svg>
<svg style="left:868px;top:288px" width="9" height="10" viewBox="0 0 9 10"><path d="M7.3 .8L1.6 3.6l5.7 2.9" fill="none" stroke="#1a1a5a" stroke-width="1.25"/><rect x=".6" y="7.4" width="7" height="1.3" fill="#1a1a5a"/></svg>
<div class="a t" style="left:46.80px;top:307px;font-size:12px;color:#1a1a1a;transform:scaleX(0.9040);">MPD</div>
<div class="a t" style="left:111.79px;top:307px;font-size:12px;color:#1a1a1a;transform:scaleX(0.9135);">Máy phát điện</div>
<div class="a t" style="left:228.75px;top:307px;font-size:12px;color:#1a1a1a;transform:scaleX(0.9517);">Chiếc</div>
<div class="a t" style="left:283.80px;top:307px;font-size:12px;color:#1a1a1a;transform:scaleX(0.9017);">Công ty Cổ phần ABC</div>
<div class="a t" style="left:460.81px;top:307px;font-size:12px;color:#1a1a1a;transform:scaleX(0.8909);">1,00</div>
<div class="a t" style="left:546.70px;top:307px;font-size:12px;color:#1a1a1a;transform:scaleX(0.8957);">0,00</div>
<div class="a t" style="left:635.76px;top:307px;font-size:12px;color:#1a1a1a;transform:scaleX(0.9364);">1,00</div>
<div class="a t" style="left:684.81px;top:307px;font-size:12px;color:#1a1a1a;transform:scaleX(0.8915);">20.000.000</div>
<div class="a t" style="left:853.30px;top:307px;font-size:12px;color:#1a1a1a;transform:scaleX(0.9000);">0</div>
<div class="a t" style="left:1011.81px;top:307px;font-size:12px;color:#1a1a1a;transform:scaleX(0.8915);">20.000.000</div>
<div class="a" style="left:38px;top:300px;width:1033px;height:25px;border:3px solid #c00000;"></div>
<div class="a" style="left:41px;top:653px;width:65px;height:16px;background:#d6d6d6;"></div>
<div class="a" style="left:106px;top:653px;width:1px;height:16px;background:#7fa5d4;"></div>
<div class="a" style="left:107px;top:653px;width:298px;height:16px;background:#f0f0f0;"></div>
<div class="a" style="left:405px;top:653px;width:665px;height:16px;background:#d6d6d6;"></div>
<div class="a" style="left:405px;top:653px;width:1px;height:16px;background:#7fa5d4;"></div>
<div class="a" style="left:485px;top:653px;width:1px;height:16px;background:#7fa5d4;"></div>
<div class="a" style="left:571px;top:653px;width:1px;height:16px;background:#7fa5d4;"></div>
<div class="a" style="left:660px;top:653px;width:1px;height:16px;background:#7fa5d4;"></div>
<div class="a" style="left:742px;top:653px;width:1px;height:16px;background:#7fa5d4;"></div>
<div class="a" style="left:862px;top:653px;width:1px;height:16px;background:#7fa5d4;"></div>
<div class="a t" style="left:44.80px;top:655px;font-size:12px;color:#1a1a1a;transform:scaleX(0.8977);">Số dòng</div>
<div class="a t" style="left:90.54px;top:655px;font-size:12px;color:#1a1a1a;transform:scaleX(0.7600);">=...</div>
<div class="a t" style="left:460.76px;top:655px;font-size:12px;color:#1a1a1a;transform:scaleX(0.9364);">1,00</div>
<div class="a t" style="left:546.70px;top:655px;font-size:12px;color:#1a1a1a;transform:scaleX(0.8957);">0,00</div>
<div class="a t" style="left:635.76px;top:655px;font-size:12px;color:#1a1a1a;transform:scaleX(0.9364);">1,00</div>
<div class="a t" style="left:684.81px;top:655px;font-size:12px;color:#1a1a1a;transform:scaleX(0.8915);">20.000.000</div>
<div class="a t" style="left:853.30px;top:655px;font-size:12px;color:#1a1a1a;transform:scaleX(0.9000);">0</div>
<div class="a t" style="left:1011.81px;top:655px;font-size:12px;color:#1a1a1a;transform:scaleX(0.8915);">20.000.000</div>
<div class="a" style="left:1px;top:672px;width:1071px;height:3px;background:#d6e3f3;"></div>
<div class="a" style="left:1px;top:675px;width:1071px;height:22px;background:#c4d6ee;"></div>
<div class="a" style="left:0px;top:697px;width:1074px;height:2px;background:#6898c9;"></div>
<div class="a" style="left:3px;top:677px;width:112px;height:19px;background:#adc8e6;border:1px solid #8fb2dc;"></div>
<div class="a" style="left:117px;top:677px;width:170px;height:19px;background:#adc8e6;border:1px solid #8fb2dc;"></div>
<div class="a" style="left:289px;top:677px;width:242px;height:19px;background:#adc8e6;border:1px solid #8fb2dc;"></div>
<div class="a" style="left:533px;top:677px;width:10px;height:19px;background:#adc8e6;border:1px solid #8fb2dc;"></div>
<div class="a" style="left:545px;top:677px;width:98px;height:19px;background:#adc8e6;border:1px solid #8fb2dc;"></div>
<div class="a" style="left:645px;top:677px;width:152px;height:19px;background:#adc8e6;border:1px solid #8fb2dc;"></div>
<div class="a" style="left:797px;top:677px;width:30px;height:19px;background:#adc8e6;border:1px solid #8fb2dc;"></div>
<div class="a" style="left:829px;top:677px;width:32px;height:19px;background:#adc8e6;border:1px solid #8fb2dc;"></div>
<div class="a" style="left:863px;top:677px;width:36px;height:19px;background:#adc8e6;border:1px solid #8fb2dc;"></div>
<div class="a" style="left:902px;top:677px;width:36px;height:19px;background:#adc8e6;border:1px solid #8fb2dc;"></div>
<div class="a" style="left:940px;top:677px;width:53px;height:19px;background:#adc8e6;border:1px solid #8fb2dc;"></div>
<div class="a" style="left:995px;top:677px;width:65px;height:19px;background:#adc8e6;border:1px solid #8fb2dc;"></div>
<svg style="left:5px;top:677px" width="14" height="16" viewBox="0 0 14 16"><path d="M3 2.5l2-2h7.5l-2 2z" fill="#e4dcf0" stroke="#7a6a9a" stroke-width=".6"/><rect x="3" y="2.5" width="7.5" height="12" fill="#b9acd6" stroke="#6e5e92" stroke-width=".8"/><path d="M10.5 2.5l2-2v12l-2 2z" fill="#8c7cb4" stroke="#6e5e92" stroke-width=".6"/><path d="M4.5 5h4.5M4.5 7h4.5" stroke="#ece6f6" stroke-width=".8"/><circle cx="5" cy="11.3" r="4.3" fill="#3cae3c" stroke="#1f7a1f" stroke-width=".6"/><path d="M2.8 11.3l1.6 1.6 2.9-3" fill="none" stroke="#fff" stroke-width="1.3"/></svg>
<div class="a t" style="left:22.80px;top:681px;font-size:12px;color:#1a1a1a;transform:scaleX(0.8989);">Máy chủ: PMTAM</div>
<svg style="left:120px;top:678px" width="12" height="15" viewBox="0 0 12 15"><defs><linearGradient id="dbg" x1="0" x2="1"><stop offset="0" stop-color="#f8d23a"/><stop offset=".6" stop-color="#fff49a"/><stop offset="1" stop-color="#f0c020"/></linearGradient></defs><path d="M.6 2.2C.6 1 3 .5 6 .5s5.4.5 5.4 1.7v10.6c0 1.2-2.4 1.7-5.4 1.7S.6 14 .6 12.8z" fill="url(#dbg)" stroke="#d9a000" stroke-width="1"/><path d="M.8 7.2c1 .9 3 1.1 5.2 1.1s4.2-.2 5.2-1.1" fill="none" stroke="#e0b010" stroke-width=".9"/></svg>
<div class="a t" style="left:136.70px;top:681px;font-size:12px;color:#1a1a1a;transform:scaleX(0.9071);">Tên DLKT: ABC2017_ACT04</div>
<svg style="left:291px;top:677px" width="14" height="16" viewBox="0 0 14 16"><path d="M1 15c0-4 2.5-6 6-6s6 2 6 6z" fill="#a8d8f8" stroke="#3a9ae0" stroke-width=".9"/><path d="M7 9.5l-.8 1.5.8 3 .8-3z" fill="#3a9ae0"/><ellipse cx="7.5" cy="5" rx="2.8" ry="3.4" fill="#f7c21a"/><path d="M4.6 4.6C4.4 2 5.6.6 7.6.6s3.2 1.2 3 3c-1-.8-2.2-1-3.4-.6-1 .3-1.8.9-2.6 1.6z" fill="#2a2a2a"/></svg>
<div class="a t" style="left:307.79px;top:681px;font-size:12px;color:#1a1a1a;transform:scaleX(0.9085);">Người dùng: pmtam@software.misa.com.vn</div>
<div class="a t" style="left:649.70px;top:681px;font-size:12px;color:#1a1a1a;font-weight:bold;transform:scaleX(0.9195);">Tổng đài tư vấn: 1900 8677</div>
<div class="a t" style="left:800.70px;top:681px;font-size:12px;color:#1a1a1a;transform:scaleX(0.8640);">OVR</div>
<div class="a t" style="left:831.76px;top:681px;font-size:12px;color:#1a1a1a;transform:scaleX(0.9440);">NUM</div>
<div class="a t" style="left:943.70px;top:681px;font-size:12px;color:#1a1a1a;transform:scaleX(0.8512);">8:34 SA</div>
<div class="a t" style="left:998.74px;top:681px;font-size:12px;color:#1a1a1a;transform:scaleX(0.9593);">14/04/2017</div>
<div class="a" style="left:1069px;top:688px;width:2px;height:2px;background:#6a88b0;"></div>
<div class="a" style="left:1066px;top:691px;width:2px;height:2px;background:#6a88b0;"></div>
<div class="a" style="left:1069px;top:691px;width:2px;height:2px;background:#6a88b0;"></div>
<div class="a" style="left:1063px;top:694px;width:2px;height:2px;background:#6a88b0;"></div>
<div class="a" style="left:1066px;top:694px;width:2px;height:2px;background:#6a88b0;"></div>
<div class="a" style="left:1069px;top:694px;width:2px;height:2px;background:#6a88b0;"></div>
</body></html>
